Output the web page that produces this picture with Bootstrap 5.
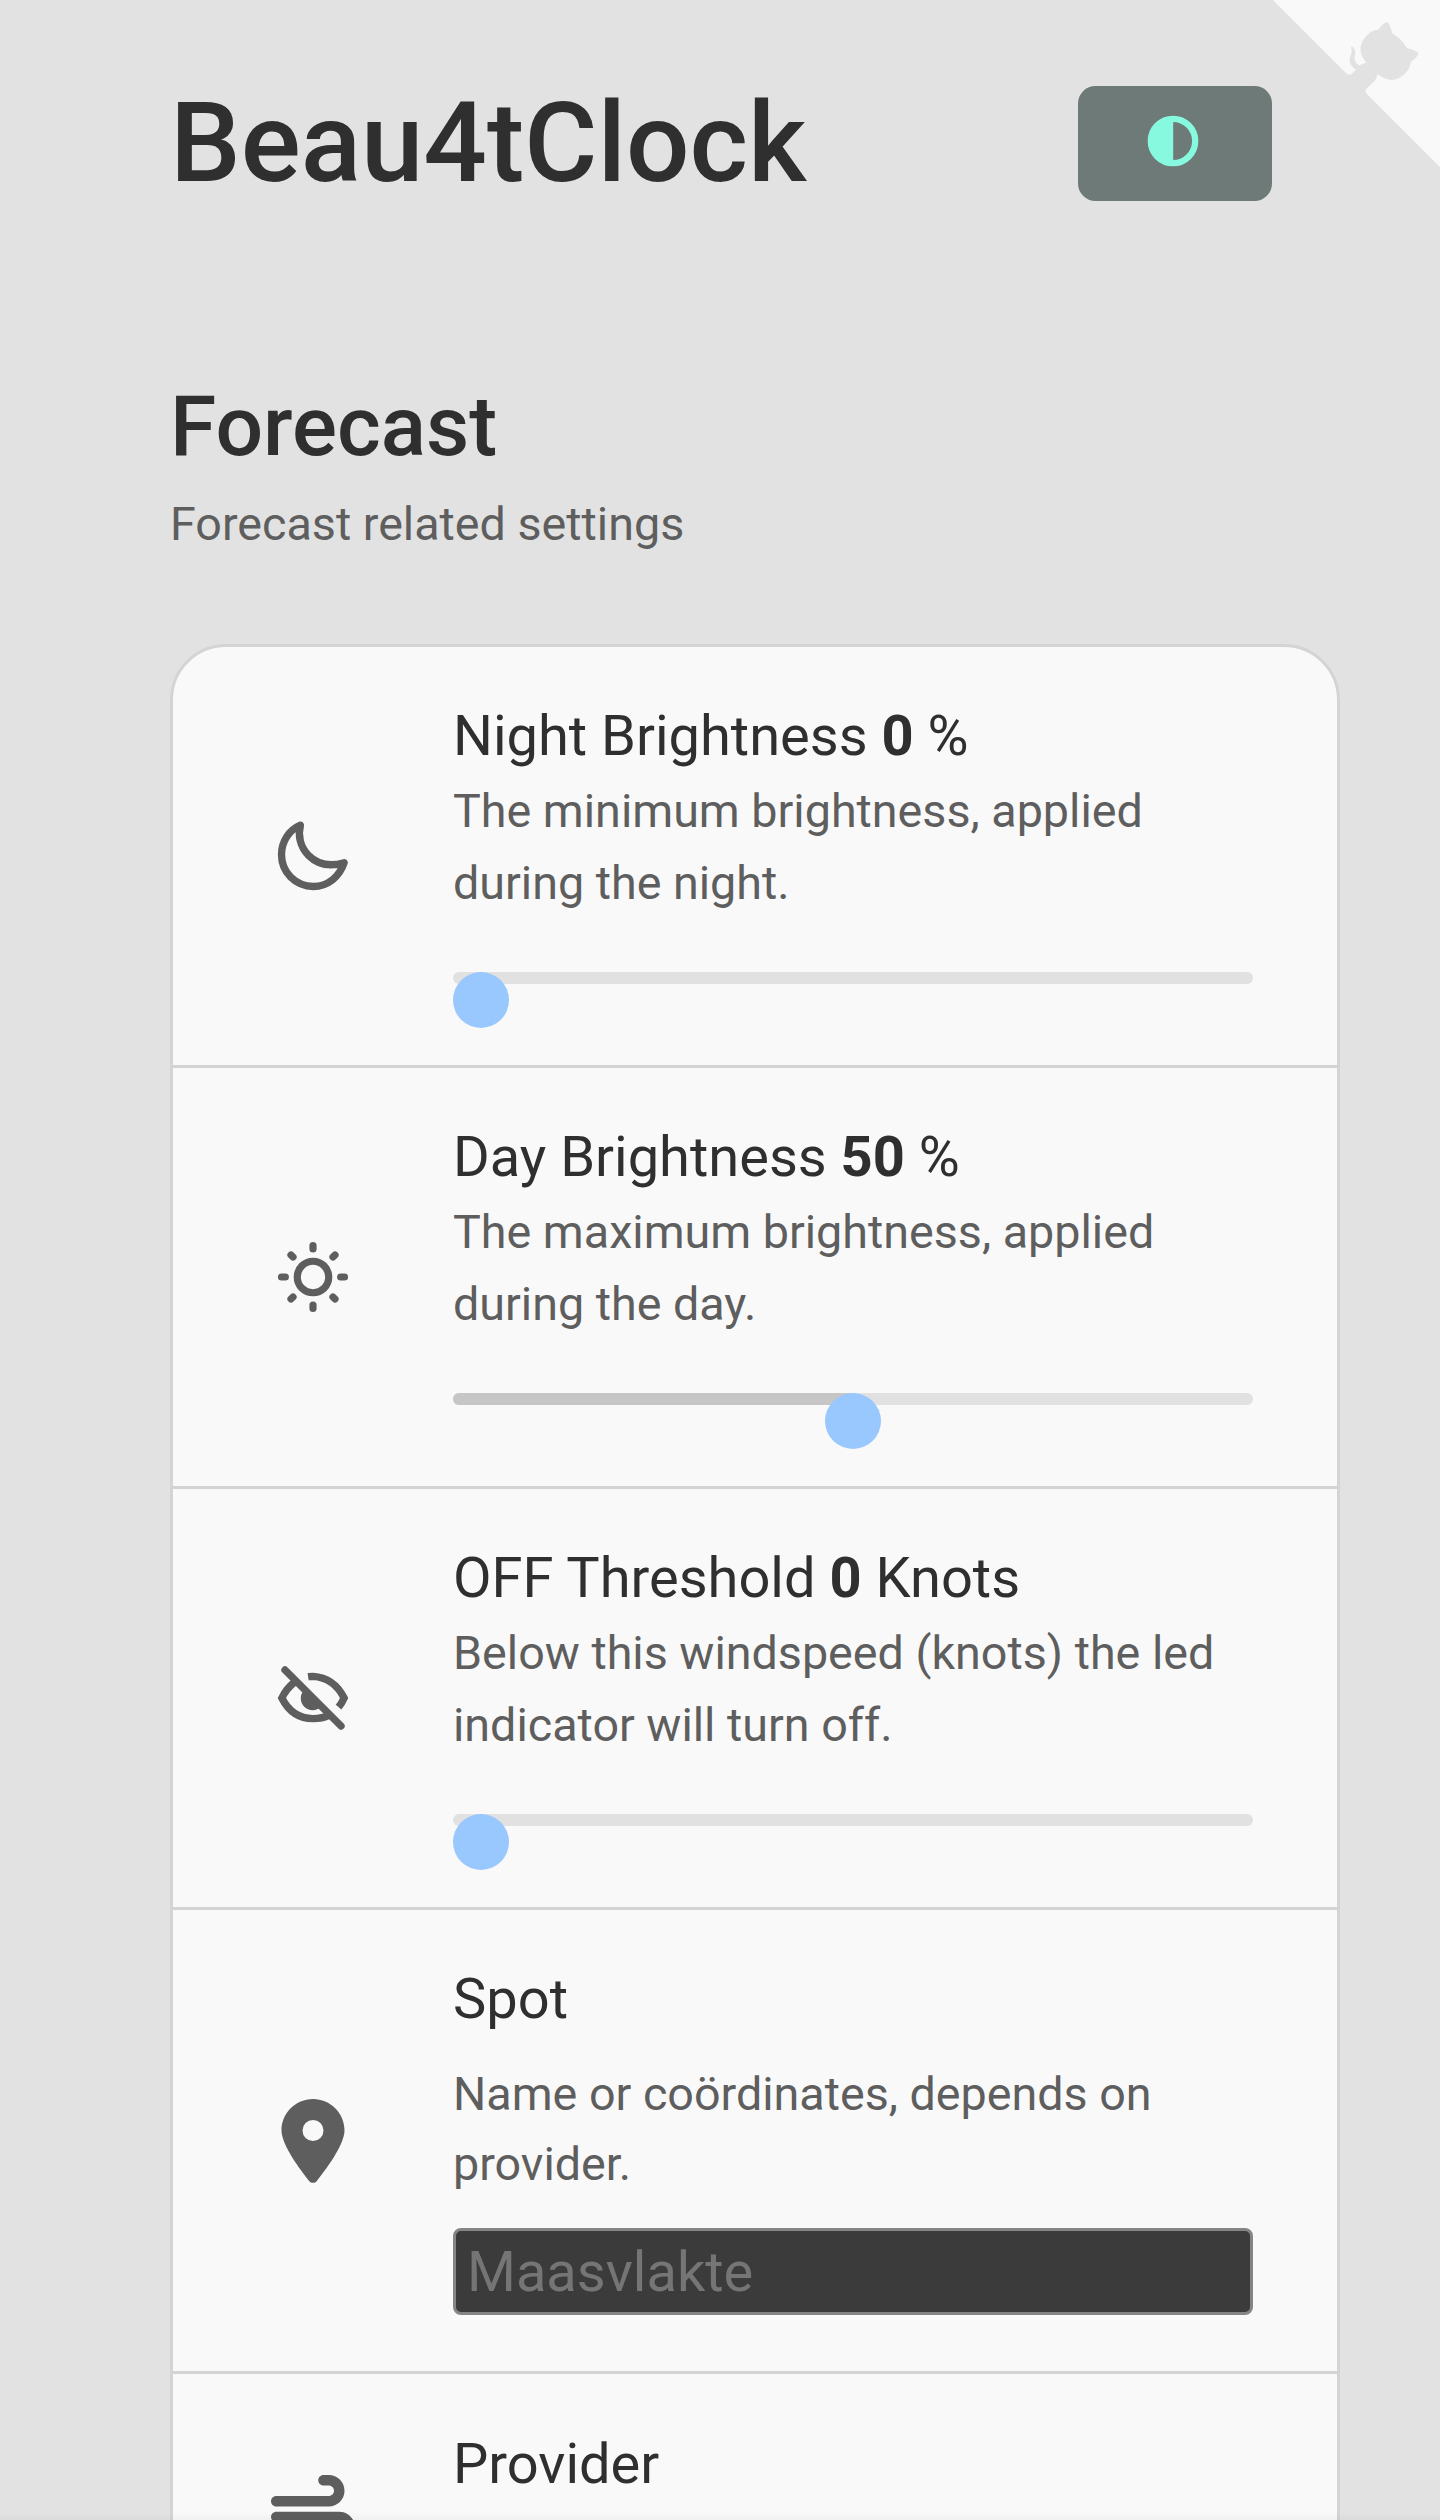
<!DOCTYPE html>
<html lang="en">
<head>
<meta charset="utf-8">
<meta name="viewport" content="width=device-width, initial-scale=1">
<title>Beau4tClock</title>
<link href="https://cdn.jsdelivr.net/npm/bootstrap@5.3.0/dist/css/bootstrap.min.css" rel="stylesheet">
<style>
:root{--ink:#2f2f2f;--soft:#5e5e5e;--line:#d4d4d4;--panel:#f9f9f9}
body{background:#e2e2e2;color:var(--ink);font-family:Roboto,"Noto Sans",sans-serif;font-size:56px;line-height:84px}
.screen{height:2520px}
.page{padding:0 100px 0 170px}
.topbar{padding:86px 68px 0 0;height:202px}
h1{font-size:112px;line-height:114px;font-weight:500}
h2{font-size:84px;line-height:96px;font-weight:500}
.btn-theme{--bs-btn-bg:#6e7a77;--bs-btn-color:#87f9df;--bs-btn-hover-bg:#6e7a77;--bs-btn-border-width:0;width:194px;height:115px;border-radius:17.5px}
.btn-theme svg{width:52px;height:52px;margin:-5px 4px 0 0}
.corner-link{top:-6px;right:-2px;line-height:0}
.intro{padding-top:177px}
.intro .hint{padding-top:13px}
.hint{font-size:46.67px;line-height:72px;color:var(--soft)}
.settings{border:3px solid var(--line);border-radius:56px 56px 0 0;background:var(--panel);margin-top:84px}
.setting{border-bottom:3px solid var(--line);padding-right:84px;height:421px}
.setting-text{height:464px}
.setting-icon{width:280px;color:var(--soft)}
.setting-icon svg{height:84px;width:84px}
.setting-icon.from-top svg{margin-top:101px}
.setting-body{padding-top:47px}
.from-top + .setting-body{padding-top:48px}
.setting-title{height:81px;line-height:84px}
.setting-text .hint{line-height:70px;padding-top:21px}
.slider{height:56px;margin-top:53px}
.slider .progress{height:12px;border-radius:6px;background:#e1e1e1}
.slider .progress-bar{background:#c6c6c6}
.knob{top:0;width:56px;height:56px;background:#99c8ff;transform:translateX(-50%)}
.spot-input{margin-top:29px;height:87px;padding:0 11px;border:3px solid #858585;border-radius:8px;background:#3b3b3b!important;font-size:56px;line-height:81px;color:#eee}
.spot-input::placeholder{color:#757575}
.edge-shade{height:8px;background:linear-gradient(rgba(0,0,0,0),rgba(0,0,0,.035))}
</style>
</head>
<body>
<div class="screen position-relative overflow-hidden">
<a class="corner-link position-absolute" href="#" aria-label="Source code">
<svg width="175" height="175" viewBox="0 0 250 250"><path d="M0,0 L115,115 L130,115 L142,142 L250,250 L250,0 Z" fill="#f9f9f9"/><g fill="#e2e2e2"><path d="M128.3,109.0 C113.8,99.7 119.0,89.6 119.0,89.6 C122.0,82.7 120.5,78.6 120.5,78.6 C119.2,72.0 123.4,76.3 123.4,76.3 C127.3,80.9 125.5,87.3 125.5,87.3 C122.9,97.6 130.6,101.9 134.4,103.2"/><path d="M115.0,115.0 C114.9,115.1 118.7,116.5 119.8,115.4 L133.7,101.6 C136.9,99.2 139.9,98.4 142.2,98.6 C133.8,88.0 127.5,74.4 143.8,58.0 C148.5,53.4 154.0,51.2 159.7,51.0 C160.3,49.4 163.2,43.6 171.4,40.1 C171.4,40.1 176.1,42.5 178.8,56.2 C183.1,58.6 187.2,61.8 190.9,65.4 C194.5,69.0 197.7,73.2 200.1,77.6 C213.8,80.2 216.3,84.9 216.3,84.9 C212.7,93.1 206.9,96.0 205.4,96.6 C205.1,102.4 203.0,107.8 198.3,112.5 C181.9,128.9 168.3,122.5 157.7,114.1 C157.9,116.9 156.7,120.9 152.7,124.9 L141.0,136.5 C139.8,137.7 141.6,141.9 141.8,141.8 Z"/></g></svg>
</a>
<main class="page">
<header class="topbar d-flex justify-content-between align-items-start">
<h1 class="m-0">Beau4tClock</h1>
<button class="btn btn-theme d-flex align-items-center justify-content-center p-0" aria-label="Toggle theme"><svg viewBox="0 0 52 52"><circle cx="26" cy="26" r="22.2" fill="none" stroke="currentColor" stroke-width="6.3"/><path d="M26.2 3A23 23 0 0 0 26.2 49Z" fill="currentColor"/></svg></button>
</header>
<section class="intro">
<h2 class="m-0">Forecast</h2>
<p class="hint m-0">Forecast related settings</p>
</section>
<section class="settings">
<div class="setting d-flex">
<div class="setting-icon d-flex align-items-center justify-content-center flex-shrink-0"><svg viewBox="0 0 24 24"><path d="M8.4 3.2C7.6 6.2 8.4 9.5 10.7 11.8C13.3 14.4 16.9 15.1 20.9 13.9C19.6 17.9 16.2 20.7 12.1 20.7C7 20.7 3 16.7 3 11.6C3 7.8 5.2 4.6 8.4 3.2Z" fill="none" stroke="currentColor" stroke-width="2.1" stroke-linejoin="round"/></svg></div>
<div class="setting-body flex-grow-1">
<div class="setting-title">Night Brightness <b>0</b> %</div>
<p class="hint m-0">The minimum brightness, applied during the night.</p>
<div class="slider position-relative"><div class="progress"><div class="progress-bar" style="width:0%"></div></div><span class="knob position-absolute rounded-circle" style="left:28px"></span></div>
</div>
</div>
<div class="setting d-flex">
<div class="setting-icon d-flex align-items-center justify-content-center flex-shrink-0"><svg viewBox="0 0 24 24" fill="none" stroke="currentColor" stroke-width="2.05" stroke-linecap="round"><circle cx="12" cy="12" r="4.5"/><path d="M12 3v1M12 20v1M3 12h1.1M19.9 12h1.1M5.7 5.7l.6.6M17.7 17.7l.6.6M5.7 18.3l.6-.6M17.7 6.3l.6-.6"/></svg></div>
<div class="setting-body flex-grow-1">
<div class="setting-title">Day Brightness <b>50</b> %</div>
<p class="hint m-0">The maximum brightness, applied during the day.</p>
<div class="slider position-relative"><div class="progress"><div class="progress-bar" style="width:50%"></div></div><span class="knob position-absolute rounded-circle" style="left:50%"></span></div>
</div>
</div>
<div class="setting d-flex">
<div class="setting-icon d-flex align-items-center justify-content-center flex-shrink-0"><svg viewBox="0 0 24 24" fill="none" stroke="currentColor" stroke-width="2.1"><path d="M4 4l16 16" stroke-linecap="round"/><path d="M6.7 7.5Q4.4 9.3 3.1 12Q6.1 17.9 12 17.9Q14.6 17.9 16.7 16.9M10.6 5.9Q11.3 5.8 12 5.8Q18 6.2 20.9 12Q20.3 13.4 19.3 14.6"/><path d="M9.5 9.7A3.3 3.3 0 1 0 14.3 14.5Z" fill="currentColor" stroke="none"/></svg></div>
<div class="setting-body flex-grow-1">
<div class="setting-title">OFF Threshold <b>0</b> Knots</div>
<p class="hint m-0">Below this windspeed (knots) the led indicator will turn off.</p>
<div class="slider position-relative"><div class="progress"><div class="progress-bar" style="width:0%"></div></div><span class="knob position-absolute rounded-circle" style="left:28px"></span></div>
</div>
</div>
<div class="setting setting-text d-flex">
<div class="setting-icon d-flex align-items-center justify-content-center flex-shrink-0"><svg viewBox="0 0 384 512" fill="currentColor"><path d="M215.7 499.2C267 435 384 279.4 384 192C384 86 298 0 192 0S0 86 0 192c0 87.4 117 243 168.3 307.2c12.3 15.3 35.1 15.3 47.4 0zM192 128a64 64 0 1 1 0 128 64 64 0 1 1 0-128z"/></svg></div>
<div class="setting-body flex-grow-1">
<div class="setting-title">Spot</div>
<p class="hint m-0">Name or coördinates, depends on provider.</p>
<input class="form-control spot-input" placeholder="Maasvlakte">
</div>
</div>
<div class="setting d-flex">
<div class="setting-icon from-top d-flex align-items-start justify-content-center flex-shrink-0"><svg viewBox="0 0 512 512" fill="currentColor"><path d="M288 32c0 17.7 14.3 32 32 32h32c17.7 0 32 14.3 32 32s-14.3 32-32 32H32c-17.7 0-32 14.3-32 32s14.3 32 32 32H352c53 0 96-43 96-96s-43-96-96-96H320c-17.7 0-32 14.3-32 32zm64 352c0 17.7 14.3 32 32 32h32c53 0 96-43 96-96s-43-96-96-96H32c-17.7 0-32 14.3-32 32s14.3 32 32 32H416c17.7 0 32 14.3 32 32s-14.3 32-32 32H384c-17.7 0-32 14.3-32 32z"/></svg></div>
<div class="setting-body flex-grow-1">
<div class="setting-title">Provider</div>
</div>
</div>
</section>
</main>
<div class="edge-shade position-absolute bottom-0 start-0 w-100"></div>
</div>
<script src="https://cdn.jsdelivr.net/npm/bootstrap@5.3.0/dist/js/bootstrap.bundle.min.js"></script>
</body>
</html>
